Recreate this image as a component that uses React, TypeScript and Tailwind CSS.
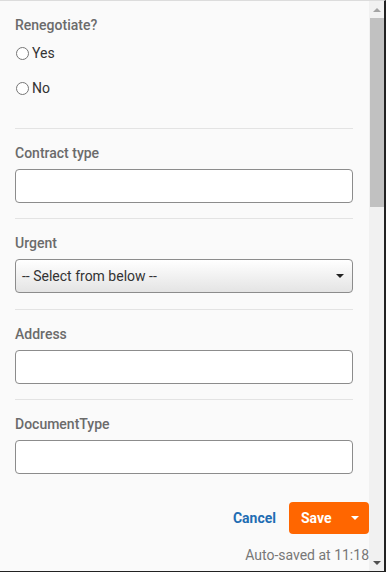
const fields = [
  { label: "Contract type", kind: "input" },
  { label: "Urgent", kind: "select" },
  { label: "Address", kind: "input" },
  { label: "DocumentType", kind: "input" },
];

function Radio({ label, className }: { label: string; className?: string }) {
  return (
    <label className={`flex h-[20px] items-center ${className ?? ""}`}>
      <span className="ml-[1px] h-[13px] w-[13px] rounded-full border border-[#767676] bg-white" />
      <span className="ml-[3px] text-[14px] leading-[20px] text-[#333]">{label}</span>
    </label>
  );
}

export default function App() {
  return (
    <div className="flex h-[572px] w-[386px] border-t border-b border-r-2 border-t-[#dcdcdc] border-b-[#222] border-r-[#222] bg-[#fafafa] font-['Roboto','Liberation_Sans',sans-serif]">
      <div className="flex min-w-0 flex-1 flex-col pl-[15px]">
        <div className="pr-[16px]">
          <div className="mt-[14px] text-[14px] font-medium leading-[20px] text-[#6b6b6b]">
            Renegotiate?
          </div>
          <Radio label="Yes" className="mt-[8px]" />
          <Radio label="No" className="mt-[15px]" />
          <div className="mt-[30px] h-px bg-[#e3e3e3]" />

          {fields.map((f, i) => (
            <div key={f.label}>
              <div className="mt-[14px] text-[14px] font-medium leading-[20px] text-[#6b6b6b]">
                {f.label}
              </div>
              {f.kind === "select" ? (
                <div className="mt-[6px] flex h-[34px] items-center justify-between rounded-[4px] border border-[#8c8c8c] bg-gradient-to-b from-white to-[#e4e4e4] pl-[6px] pr-[8px]">
                  <span className="text-[14px] text-[#333]">-- Select from below --</span>
                  <span className="h-0 w-0 border-x-[4px] border-t-[4px] border-x-transparent border-t-[#222]" />
                </div>
              ) : (
                <div className="mt-[6px] h-[34px] rounded-[4px] border border-[#8c8c8c] bg-white" />
              )}
              {i < fields.length - 1 && (
                <div className={`${f.kind === "select" ? "mt-[16px]" : "mt-[15px]"} h-px bg-[#e3e3e3]`} />
              )}
            </div>
          ))}
        </div>

        <div className="mt-[28px] flex items-center justify-end">
          <button className="text-[14px] font-bold text-[#1f6db3]">Cancel</button>
          <button className="ml-[13px] flex h-[32px] w-[80px] items-center justify-between rounded-[4px] bg-[#ff6600] pl-[12px] pr-[10px] text-[14px] font-bold text-white">
            Save
            <span className="h-0 w-0 border-x-[4px] border-t-[4px] border-x-transparent border-t-white" />
          </button>
        </div>
        <div className="mt-[11px] text-right text-[14px] leading-[20px] text-[#777]">
          Auto-saved at 11:18
        </div>
      </div>

      <div className="flex w-[15px] flex-col bg-[#f1f1f1]">
        <div className="flex h-[17px] items-center justify-center">
          <span className="h-0 w-0 border-x-[4px] border-b-[4px] border-x-transparent border-b-[#a3a3a3]" />
        </div>
        <div className="ml-[1px] h-[189px] bg-[#c1c1c1]" />
        <div className="flex-1" />
        <div className="flex h-[17px] items-center justify-center">
          <span className="h-0 w-0 border-x-[4px] border-t-[4px] border-x-transparent border-t-[#505050]" />
        </div>
      </div>
    </div>
  );
}
